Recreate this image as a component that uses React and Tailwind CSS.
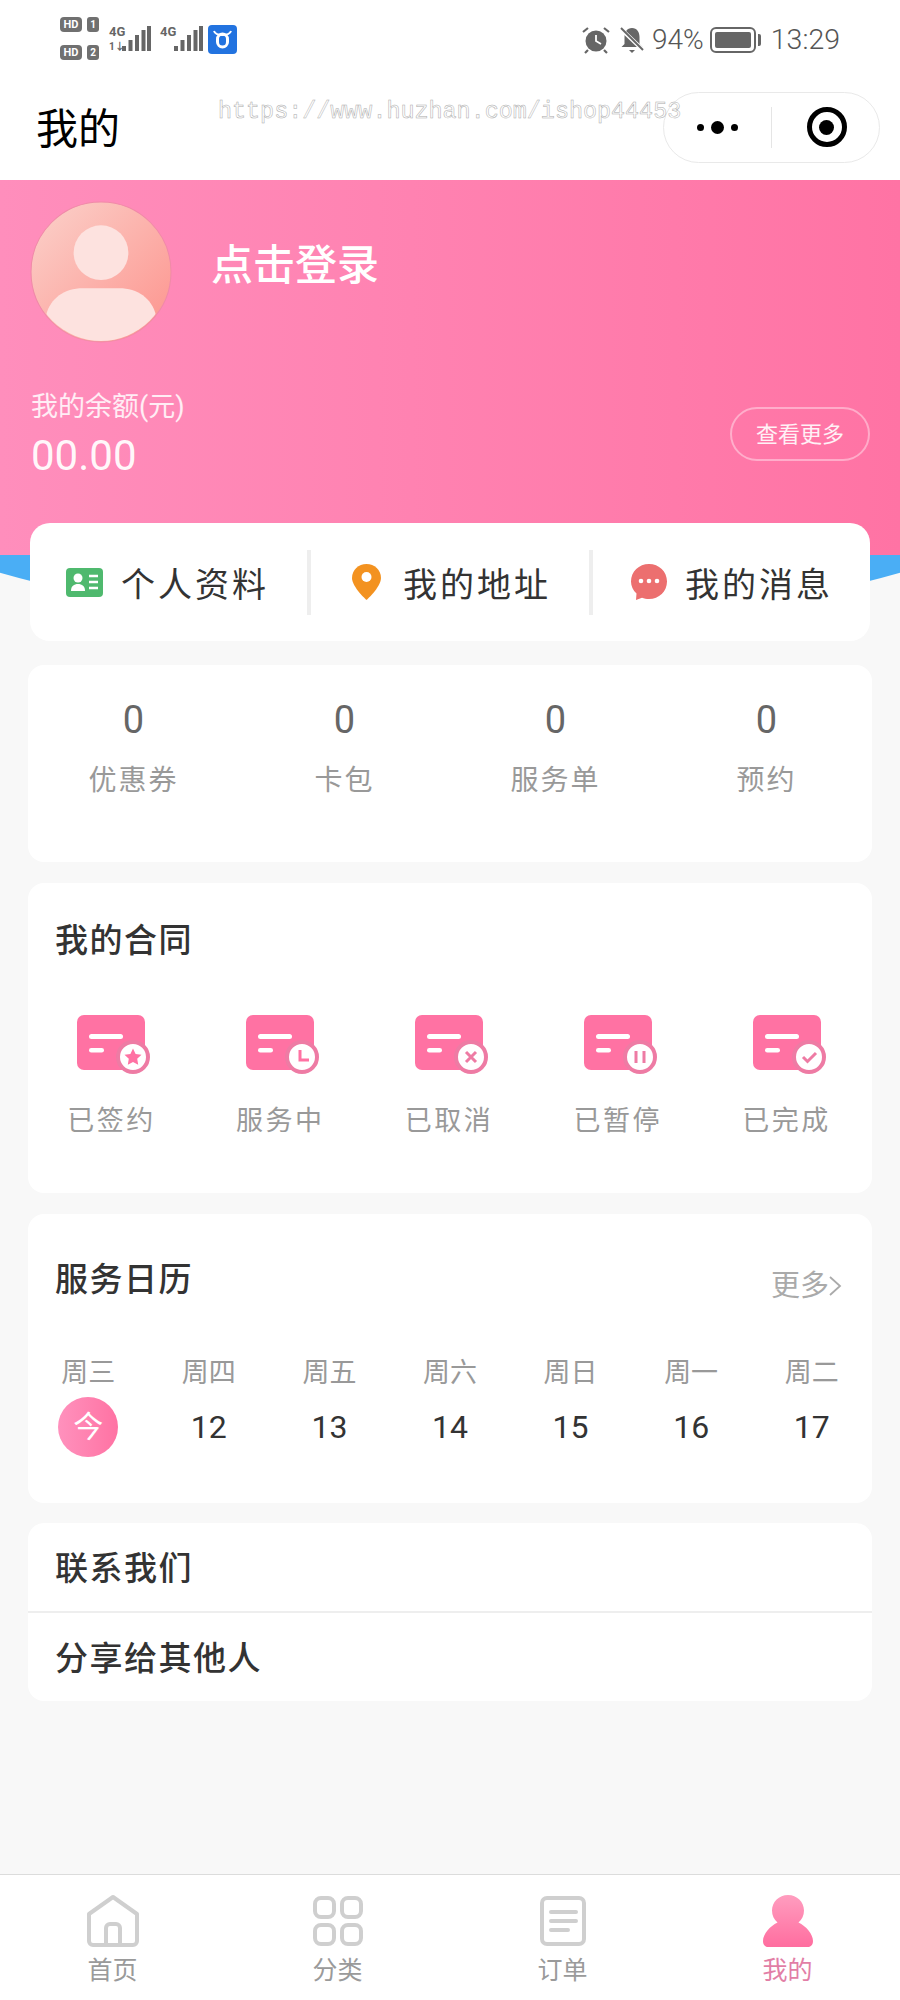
import React from "react";

const CJK = "font-['Roboto','Noto_Sans_CJK_SC',sans-serif]";

function DocIcon({ children }) {
  return (
    <svg width="76" height="60" viewBox="0 0 76 60" className="block">
      <rect x="0" y="0" width="68" height="55" rx="7" fill="#ff72a3" />
      <rect x="12" y="19" width="34" height="5" rx="2.5" fill="#fff" />
      <rect x="12" y="33" width="15" height="4.5" rx="2.25" fill="#fff" />
      <circle cx="56" cy="42" r="15" fill="#fff" stroke="#ee7ba4" strokeWidth="4" />
      {children}
    </svg>
  );
}

const contractIcons = [
  <path key="a" d="M56 33.5l2.6 5.4 5.9.8-4.3 4.1 1 5.9-5.2-2.8-5.2 2.8 1-5.9-4.3-4.1 5.9-.8z" fill="#ff72a3" />,
  <path key="b" d="M54 35v10h9" fill="none" stroke="#ff72a3" strokeWidth="3" />,
  <path key="c" d="M51 37l10 10M61 37l-10 10" fill="none" stroke="#ee7ba4" strokeWidth="3" />,
  <path key="d" d="M52 36v12M60 36v12" fill="none" stroke="#ee7ba4" strokeWidth="3" />,
  <path key="e" d="M50 42l4.5 4.5L63 38" fill="none" stroke="#ee7ba4" strokeWidth="3" />,
];

const contractLabels = ["已签约", "服务中", "已取消", "已暂停", "已完成"];
const stats = ["优惠券", "卡包", "服务单", "预约"];
const week = ["周三", "周四", "周五", "周六", "周日", "周一", "周二"];
const dates = ["今", "12", "13", "14", "15", "16", "17"];

function StatusBar() {
  const hd = (t, n) => (
    <div className="flex items-center gap-[5px]">
      <span className="w-[22px] h-[15px] rounded-[4px] bg-[#707070] text-white text-[11px] leading-[15px] font-bold text-center">{t}</span>
      <span className="w-[12px] h-[15px] rounded-[3px] bg-[#707070] text-white text-[10px] leading-[15px] font-bold text-center">{n}</span>
    </div>
  );
  const bars = (
    <svg width="29" height="26" viewBox="0 0 29 26" fill="#666">
      <rect x="0" y="20" width="4" height="5" />
      <rect x="6.500" y="14" width="4" height="11" />
      <rect x="13" y="9" width="4" height="16" />
      <rect x="19.500" y="4" width="4" height="21" />
      <rect x="25" y="0" width="4" height="25" />
    </svg>
  );
  return (
    <div className="h-[80px] bg-white flex items-start justify-between pl-[60px] pr-[60px] text-[#666]">
      <div className="flex items-start pt-[17px]">
        <div className="flex flex-col gap-[13px]">
          {hd("HD", "1")}
          {hd("HD", "2")}
        </div>
        <div className="relative w-[46px] h-[30px] ml-[10px] mt-[8px]">
          <span className="absolute left-0 top-0 text-[13px] leading-[14px] font-bold">4G</span>
          <span className="absolute left-0 top-[16px] text-[10px] leading-[11px] font-bold">1↓</span>
          <div className="absolute left-[13px] top-[1px]">{bars}</div>
        </div>
        <div className="relative w-[46px] h-[30px] ml-[5px] mt-[8px]">
          <span className="absolute left-0 top-0 text-[13px] leading-[14px] font-bold">4G</span>
          <div className="absolute left-[14px] top-[1px]">{bars}</div>
        </div>
        <svg width="29" height="29" viewBox="0 0 29 29" className="ml-[2px] mt-[8px]">
          <rect width="29" height="29" rx="4" fill="#2273e0" />
          <path d="M6 6c1 3 3 4 8.500 4s7.500-1 8.500-4" fill="none" stroke="#fff" strokeWidth="2" />
          <rect x="9.500" y="9" width="10" height="13" rx="5" fill="none" stroke="#fff" strokeWidth="3" />
        </svg>
      </div>
      <div className="flex items-center pt-[24px]">
        <svg width="28" height="28" viewBox="0 0 28 28" fill="#666">
          <circle cx="14" cy="15" r="10.500" />
          <path d="M14 9v6l5 3" stroke="#fff" strokeWidth="1.800" fill="none" />
          <path d="M1 6l5-4M27 6l-5-4M6 24l-3 3M22 24l3 3" stroke="#666" strokeWidth="2.200" fill="none" />
        </svg>
        <svg width="26" height="28" viewBox="0 0 26 28" fill="#666" className="ml-[9px]">
          <path d="M13 2c5 0 7.500 4 7.500 9v7l3 3H2.500l3-3v-7C5.500 6 8 2 13 2z" />
          <path d="M10 24h6l-3 3z" />
          <path d="M2 3l22 21" stroke="#fff" strokeWidth="4" />
          <path d="M2 2l22 22" stroke="#666" strokeWidth="2" />
        </svg>
        <span className="ml-[7px] text-[28px] leading-[32px] font-['Roboto',sans-serif] font-light text-[#555]">94%</span>
        <div className="ml-[6px] w-[46px] h-[26px] rounded-[6px] border-2 border-[#666] p-[3px]">
          <div className="w-full h-full rounded-[2px] bg-[#666]" />
        </div>
        <div className="ml-[2px] w-[3px] h-[12px] rounded-r-[2px] bg-[#666]" />
        <span className="ml-[10px] text-[28.500px] leading-[32px] font-['Roboto',sans-serif] font-light text-[#555]">13:29</span>
      </div>
    </div>
  );
}

function Header() {
  return (
    <div className="relative h-[100px] bg-white flex items-center pl-[36px] pr-[20px] justify-between">
      <span className="text-[42px] leading-[56px] text-black">我的</span>
      <span className="absolute left-[218px] top-[16px] font-['Liberation_Mono',monospace] text-[23.400px] leading-[32px] text-transparent [-webkit-text-stroke:0.5px_#aaa] whitespace-nowrap z-10">
        https://www.huzhan.com/ishop44453
      </span>
      <div className="w-[217px] h-[71px] rounded-full border border-[#e9e9e9] flex items-center bg-white mt-[-6px]">
        <div className="w-[107px] flex items-center justify-center gap-[7px]">
          <span className="w-[7px] h-[7px] rounded-full bg-black" />
          <span className="w-[13px] h-[13px] rounded-full bg-black" />
          <span className="w-[7px] h-[7px] rounded-full bg-black" />
        </div>
        <div className="w-px h-[41px] bg-[#e5e5e5]" />
        <div className="flex-1 flex justify-center">
          <div className="w-[40px] h-[40px] rounded-full border-[5px] border-black flex items-center justify-center ml-[2px]">
            <span className="w-[15px] h-[15px] rounded-full bg-black" />
          </div>
        </div>
      </div>
    </div>
  );
}

function Hero() {
  return (
    <div className="relative h-[375px]">
      <div className="absolute left-[-200px] top-[57px] w-[1300px] h-[390px] rounded-[50%] bg-[#4aaef5]" />
      <div className="relative h-full bg-gradient-to-r from-[#ff8ebc] to-[#ff73a4] pl-[30px] pr-[30px] pt-[21px]">
        <div className="flex items-start">
          <svg width="142" height="142" viewBox="0 0 140 140" className="block">
            <defs>
              <linearGradient id="av" x1="0" y1="0" x2="1" y2="1">
                <stop offset="0" stopColor="#fbd2cb" />
                <stop offset="1" stopColor="#fd928c" />
              </linearGradient>
              <clipPath id="avc">
                <circle cx="70" cy="70" r="68" />
              </clipPath>
            </defs>
            <circle cx="70" cy="70" r="69" fill="url(#av)" stroke="#f08aa8" strokeWidth="1" />
            <circle cx="70" cy="51" r="27" fill="#fde2df" />
            <path d="M16 112c4-16 18-26 36-26h36c18 0 32 10 36 26v30H16z" fill="#fde2df" clipPath="url(#avc)" />
          </svg>
          <span className="ml-[39px] mt-[35px] text-[42px] leading-[60px] text-white font-medium">点击登录</span>
        </div>
        <div className="flex items-start justify-between mt-[46px]">
          <div>
            <div className="pl-[1px] text-[27px] leading-[36px] text-white/85">我的余额(元)</div>
            <div className="pl-[1px] text-[42px] leading-[50px] mt-[6px] text-white/95 font-['Roboto',sans-serif]">00.00</div>
          </div>
          <div className="w-[140px] h-[54px] mt-[18px] rounded-full border-2 border-white/40 flex items-center justify-center text-[22px] text-white/90">查看更多</div>
        </div>
      </div>
    </div>
  );
}

function Menu() {
  const sep = <div className="w-[4px] h-[65px] bg-[#eeeeee]" />;
  const label = "text-[34px] leading-[48px] tracking-[3px] text-[#333] relative top-[3px]";
  return (
    <div className="relative mx-[30px] mt-[-32px] h-[118px] rounded-[20px] bg-white flex items-center">
      <div className="w-[277px] flex items-center pl-[36px]">
        <svg width="37" height="29" viewBox="0 0 37 29">
          <rect width="37" height="29" rx="4" fill="#4fb96e" />
          <circle cx="12" cy="10" r="4.500" fill="#fff" />
          <path d="M5 23c0-5 3-7 7-7s7 2 7 7z" fill="#fff" />
          <path d="M23 8h9M23 14h9M23 20h9" stroke="#fff" strokeWidth="2.500" />
        </svg>
        <span className={`ml-[18px] ${label}`}>个人资料</span>
      </div>
      {sep}
      <div className="w-[278px] flex items-center pl-[41px]">
        <svg width="29" height="36" viewBox="0 0 29 36">
          <path d="M14.500 0C6.500 0 0 6 0 14c0 9 14.500 22 14.500 22S29 23 29 14C29 6 22.500 0 14.500 0z" fill="#f39220" />
          <circle cx="14.500" cy="13" r="5" fill="#fff" />
        </svg>
        <span className={`ml-[22px] ${label}`}>我的地址</span>
      </div>
      {sep}
      <div className="flex-1 flex items-center pl-[38px]">
        <svg width="36" height="36" viewBox="0 0 36 36">
          <path d="M18 0c10 0 18 7.500 18 17.500S28 35 18 35c-2.500 0-5-.5-7-1.300L5 36l.5-6.500C2 26.300 0 22 0 17.500 0 7.500 8 0 18 0z" fill="#ec6f6f" />
          <circle cx="10" cy="17" r="2.300" fill="#fff" />
          <circle cx="18" cy="17" r="2.300" fill="#fff" />
          <circle cx="26" cy="17" r="2.300" fill="#fff" />
        </svg>
        <span className={`ml-[18px] ${label}`}>我的消息</span>
      </div>
    </div>
  );
}

function Tab({ label, active, children }) {
  return (
    <div className="flex-1 flex flex-col items-center pt-[20px]">
      <div className="h-[52px] flex items-center justify-center">{children}</div>
      <span className={`mt-[6px] text-[25px] leading-[36px] ${active ? "text-[#e27ea6]" : "text-[#9a9a9a]"}`}>{label}</span>
    </div>
  );
}

function TabBar() {
  return (
    <div className="mt-auto h-[126px] bg-white border-t border-[#dcdcdc] flex">
      <Tab label="首页">
        <svg width="52" height="52" viewBox="0 0 52 52" fill="none" stroke="#cfcfcf" strokeWidth="4" strokeLinejoin="round">
          <path d="M2 19L26 2l24 17v27a4 4 0 0 1-4 4H6a4 4 0 0 1-4-4z" />
          <path d="M19 50V33a4 4 0 0 1 4-4h6a4 4 0 0 1 4 4v17" />
        </svg>
      </Tab>
      <Tab label="分类">
        <svg width="50" height="50" viewBox="0 0 50 50" fill="none" stroke="#cfcfcf" strokeWidth="4">
          <rect x="2" y="2" width="19" height="19" rx="6" />
          <rect x="29" y="2" width="19" height="19" rx="6" />
          <rect x="2" y="29" width="19" height="19" rx="6" />
          <rect x="29" y="29" width="19" height="19" rx="6" />
        </svg>
      </Tab>
      <Tab label="订单">
        <svg width="46" height="50" viewBox="0 0 46 50" fill="none" stroke="#cfcfcf">
          <rect x="2" y="2" width="42" height="46" rx="5" strokeWidth="4" />
          <path d="M11 16h25M11 25h25M11 34h17" strokeWidth="4" strokeLinecap="round" />
        </svg>
      </Tab>
      <Tab label="我的" active>
        <svg width="50" height="52" viewBox="0 0 50 52">
          <defs>
            <linearGradient id="me" x1="0" y1="0" x2="0" y2="1">
              <stop offset="0" stopColor="#ff9dbf" />
              <stop offset="1" stopColor="#ff6d9f" />
            </linearGradient>
          </defs>
          <path fill="url(#me)" d="M25 0c9 0 16 7 16 15.500 0 5-2 9-5.500 12C43 31 50 39 50 46c0 3.500-2 6-5 6H5c-3 0-5-2.500-5-6 0-7 7-15 14.500-18.500C11 24.500 9 20.500 9 15.500 9 7 16 0 25 0z" />
        </svg>
      </Tab>
    </div>
  );
}

export default function App() {
  return (
    <div className={`relative w-[900px] h-[2000px] overflow-hidden bg-[#f8f8f8] flex flex-col ${CJK}`}>
      <StatusBar />
      <Header />
      <Hero />
      <Menu />

      <div className="mx-[28px] mt-[24px] h-[197px] rounded-[16px] bg-white grid grid-cols-4 content-start pt-[30px]">
        {stats.map((s) => (
          <div key={s} className="flex flex-col items-center">
            <span className="text-[38px] leading-[50px] text-[#666] font-['Roboto',sans-serif]">0</span>
            <span className="mt-[17px] text-[28px] leading-[38px] tracking-[2px] text-[#999]">{s}</span>
          </div>
        ))}
      </div>

      <div className="mx-[28px] mt-[21px] h-[310px] rounded-[16px] bg-white pt-[35px]">
        <div className="pl-[27px] text-[33px] leading-[46px] tracking-[1.500px] text-[#333] font-medium">我的合同</div>
        <div className="grid grid-cols-5 mt-[51px]">
          {contractLabels.map((s, i) => (
            <div key={s} className="flex flex-col items-center">
              <div className="pl-[6px]">
                <DocIcon>{contractIcons[i]}</DocIcon>
              </div>
              <span className="mt-[27px] ml-[-2px] text-[27px] leading-[38px] tracking-[2.500px] text-[#999]">{s}</span>
            </div>
          ))}
        </div>
      </div>

      <div className="mx-[28px] mt-[21px] h-[289px] rounded-[16px] bg-white pt-[43px]">
        <div className="flex justify-between pl-[27px] pr-[30px]">
          <span className="text-[33px] leading-[46px] tracking-[1.500px] text-[#333] font-medium">服务日历</span>
          <span className="flex items-center mt-[10px] text-[29px] leading-[38px] text-[#aaa]">
            更多
            <svg width="13" height="22" viewBox="0 0 13 22" fill="none" stroke="#aaa" strokeWidth="1.800"><path d="M1 2l10 9-10 9" /></svg>
          </span>
        </div>
        <div className="grid grid-cols-7 mt-[49px]">
          {week.map((d) => (
            <span key={d} className="text-center text-[27px] leading-[38px] text-[#999]">{d}</span>
          ))}
        </div>
        <div className="grid grid-cols-7 mt-[5px]">
          {dates.map((d, i) =>
            i === 0 ? (
              <div key={d} className="flex justify-center">
                <span className="w-[60px] h-[60px] rounded-full bg-gradient-to-r from-[#ff91bd] to-[#ff72a3] text-white text-[30px] leading-[60px] text-center">{d}</span>
              </div>
            ) : (
              <span key={d} className="text-center text-[32px] leading-[60px] text-[#333] font-['Roboto',sans-serif]">{d}</span>
            )
          )}
        </div>
      </div>

      <div className="mx-[28px] mt-[20px] rounded-[16px] bg-white">
        <div className="h-[88px] flex items-center pl-[27px] pt-[4px] text-[33px] tracking-[1.500px] text-[#333] font-medium">联系我们</div>
        <div className="h-[2px] bg-[#eeeeee]" />
        <div className="h-[88px] flex items-center pl-[27px] pt-[4px] text-[33px] tracking-[1.500px] text-[#333] font-medium">分享给其他人</div>
      </div>

      <TabBar />
    </div>
  );
}
